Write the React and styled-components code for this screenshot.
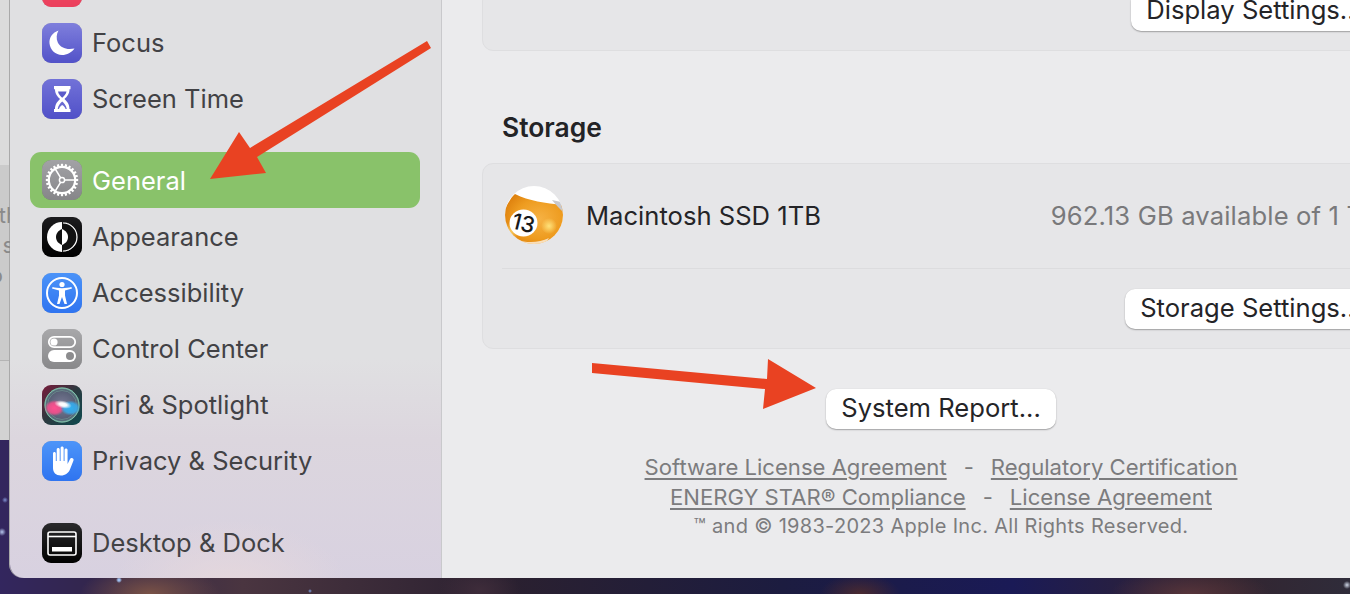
import React from 'react';
import styled, { createGlobalStyle } from 'styled-components';

const GlobalStyle = createGlobalStyle`
  html, body {
    margin: 0;
    padding: 0;
    width: 1350px;
    height: 594px;
    overflow: hidden;
  }
  * {
    box-sizing: border-box;
  }
`;

// galaxy wallpaper behind the windows
const Desktop = styled.div`
  position: relative;
  display: flex;
  align-items: flex-start;
  width: 1350px;
  height: 594px;
  overflow: hidden;
  font-family: Inter, "Liberation Sans", sans-serif;
  background:
    radial-gradient(circle at 119px 580px, #9fc0f0 0, #9fc0f0 1px, transparent 3px),
    radial-gradient(circle at 310px 591px, #7f9fe0 0, transparent 2px),
    radial-gradient(circle at 1347px 585px, #d0d8e8 0, transparent 4px),
    radial-gradient(circle at 2px 532px, #b8c8f0 0, transparent 4px),
    radial-gradient(circle at 5px 500px, #8090d0 0, transparent 3px),
    radial-gradient(ellipse 70px 30px at 150px 594px, #7a5246 0, transparent 100%),
    radial-gradient(ellipse 40px 24px at 480px 590px, #3e2c3a 0, transparent 100%),
    radial-gradient(ellipse 40px 20px at 860px 594px, #4a2a30 0, transparent 100%),
    radial-gradient(ellipse 80px 26px at 1190px 594px, #56343a 0, transparent 100%),
    linear-gradient(90deg, #33265e 0, #33264a 8%, #4a3540 18%, #2a2030 38%, #1c1c40 58%, #1a1a56 75%, #33242f 90%, #2f2c3a 100%);
`;

const BackWindow = styled.div`
  flex: 0 0 10px;
  width: 10px;
  height: 440px;
  display: flex;
  flex-direction: column;
  overflow: hidden;
`;

const BackTop = styled.div`
  height: 165px;
  background: #dbdbdb;
`;

const BackText = styled.div`
  height: 196px;
  padding-top: 35px;
  background: #cbcbcb;
  border-bottom: 1px solid #b4b4b4;
  display: flex;
  flex-direction: column;
  align-items: flex-end;
`;

const BackWord = styled.div`
  height: 30px;
  line-height: 30px;
  font-size: 22px;
  color: #8a8a8a;
  white-space: nowrap;
  transform: translateX(${(p) => p.$shift}px);
`;

const BackBottom = styled.div`
  flex: 1;
  background: #d2d2d2;
`;

const Window = styled.div`
  flex: 0 0 1340px;
  height: 578px;
  display: flex;
  overflow: hidden;
  border-bottom-left-radius: 14px;
  box-shadow: -1px 0 0 #a9a9a9;
`;

const Sidebar = styled.aside`
  flex: 0 0 432px;
  height: 578px;
  padding: 0 21px 0 20px;
  overflow: hidden;
  border-right: 1px solid #c9c9cc;
  background:
    radial-gradient(ellipse 120px 70px at 220px 590px, #e6d8dc 0, transparent 100%),
    linear-gradient(180deg, #e0e0e2 0, #e0e0e2 62%, #dcd6de 76%, #d8d1e0 100%);
`;

const NavList = styled.div`
  margin-top: -41px;
  display: flex;
  flex-direction: column;
`;

const NavRow = styled.div`
  display: flex;
  align-items: center;
  gap: 10px;
  height: 56px;
  padding-left: 12px;
  margin-top: ${(p) => p.$top || 0}px;
  border-radius: 11px;
  font-size: 25.5px;
  color: ${(p) => (p.$active ? '#ffffff' : '#424245')};
  background: ${(p) => (p.$active ? '#89c26a' : 'transparent')};
`;

const NavLabel = styled.span`
  margin-bottom: ${(p) => (p.$active ? 0 : 2)}px;
`;

const IconBox = styled.svg`
  flex: 0 0 40px;
  width: 40px;
  height: 40px;
  display: block;
  filter: drop-shadow(0 0.5px 0.5px rgba(0, 0, 0, 0.25));
`;

const BallBox = styled.svg`
  flex: 0 0 58px;
  margin-left: 3px;
`;

const Content = styled.main`
  flex: 0 0 998px;
  height: 578px;
  padding: 0 40px;
  background: #ebebed;
  display: flex;
  flex-direction: column;
`;

const Group = styled.section`
  border: 1px solid #dedee0;
  border-radius: 11px;
  background: #e6e6e8;
`;

const TopGroup = styled(Group)`
  height: 61px;
  margin-top: -10px;
  padding: 0 22px 19px 19px;
  display: flex;
  justify-content: flex-end;
  align-items: flex-end;
`;

const SectionTitle = styled.h2`
  margin: 0;
  height: 112px;
  padding: 60px 0 0 20px;
  font-size: 26.4px;
  line-height: 32px;
  font-weight: 600;
  color: #232326;
`;

const DiskRow = styled.div`
  height: 105px;
  margin: 0 19px;
  padding-bottom: 2px;
  display: flex;
  align-items: center;
  border-bottom: 1px solid #dcdcde;
`;

const DiskName = styled.div`
  margin-left: 23px;
  font-size: 25.6px;
  color: #242427;
`;

const DiskFree = styled.div`
  margin-left: auto;
  font-size: 25.6px;
  letter-spacing: 0.15px;
  color: #79797b;
  white-space: nowrap;
`;

const ActionRow = styled.div`
  height: 79px;
  padding: 0 22px 19px 19px;
  display: flex;
  align-items: flex-end;
  justify-content: flex-end;
`;

const Button = styled.button`
  height: 40px;
  padding: 0 15px 4px;
  border: 0;
  border-radius: 10px;
  background: #ffffff;
  box-shadow: 0 1px 1.5px rgba(0, 0, 0, 0.3), 0 0 1px rgba(0, 0, 0, 0.12);
  font-family: inherit;
  font-size: 25.6px;
  color: #242427;
  white-space: nowrap;
`;

const Footer = styled.footer`
  margin-top: 40px;
  display: flex;
  flex-direction: column;
  align-items: center;
`;

const LegalLinks = styled.div`
  height: 30px;
  line-height: 30px;
  font-size: 22.1px;
  color: #7c7c7e;
  white-space: nowrap;
  display: flex;
  gap: 17px;
  margin-top: ${(p) => p.$top || 0}px;
`;

const LegalLink = styled.a`
  text-decoration: underline;
  text-underline-offset: 3px;
`;

const Copyright = styled.div`
  height: 28px;
  line-height: 28px;
  font-size: 20px;
  letter-spacing: 0.3px;
  color: #7c7c7e;
  white-space: nowrap;
`;

const ArrowLayer = styled.svg`
  position: absolute;
  left: 0;
  top: 0;
  pointer-events: none;
`;

const Squircle = ({ id, from, to }) => (
  <>
    <defs>
      <linearGradient id={id} x1="0" y1="0" x2="0" y2="1">
        <stop offset="0" stopColor={from} />
        <stop offset="1" stopColor={to} />
      </linearGradient>
    </defs>
    <rect width="40" height="40" rx="9" fill={`url(#${id})`} />
  </>
);

const RedIcon = () => (
  <IconBox viewBox="0 0 40 40">
    <Squircle id="red" from="#f2566c" to="#eb3f5c" />
  </IconBox>
);

const FocusIcon = () => (
  <IconBox viewBox="0 0 40 40">
    <Squircle id="focus" from="#7f7fdc" to="#5252c8" />
    <path d="M16.5 7.5C10.5 9.5 7 14.5 7.5 20.5C8.2 27 13.5 32 20 32C25 32 29.5 29.5 32.5 25.5C25 27 18.5 25 15.8 19.5C14 15.5 14.5 11 16.5 7.5Z" fill="#fff" />
  </IconBox>
);

const HourglassIcon = () => (
  <IconBox viewBox="0 0 40 40">
    <Squircle id="time" from="#7272d8" to="#5050c8" />
    <path d="M12 7H28.5V10.2H27.5C27.5 15 25 17.5 22.5 20C25 22.5 27.5 25 27.5 30H28.5V33H12V30H13C13 25 15.5 22.5 18 20C15.5 17.5 13 15 13 10.2H12Z" fill="#fff" />
    <path d="M16 12.5H24.5C24 15.5 22 17 20.2 18.8C18.5 17 16.5 15.5 16 12.5Z" fill="#5a5aca" />
    <path d="M20.2 22.5C22 24.2 24.2 26.2 24.8 30H15.7C16.2 26.2 18.5 24.2 20.2 22.5Z" fill="#6a6ad2" />
    <path d="M20.2 26C21.8 27 23 28.3 23.6 30H16.9C17.5 28.3 18.7 27 20.2 26Z" fill="#fff" />
  </IconBox>
);

const GearIcon = () => {
  const teeth = Array.from({ length: 24 }, (_, i) => i * 15);
  return (
    <IconBox viewBox="0 0 40 40">
      <Squircle id="gear" from="#a2a2a6" to="#868689" />
      {teeth.map((deg) => (
        <rect key={deg} x="18.9" y="3.8" width="2.2" height="3.6" fill="#fff" transform={`rotate(${deg} 20 20)`} />
      ))}
      <circle cx="20" cy="20" r="13.2" fill="none" stroke="#fff" strokeWidth="2.2" />
      <circle cx="20" cy="20" r="2.6" fill="none" stroke="#fff" strokeWidth="1.5" />
      <path d="M22.6 20H33M18.7 17.8L13 8.5M18.7 22.2L13 31.5" stroke="#fff" strokeWidth="1.5" fill="none" />
    </IconBox>
  );
};

const AppearanceIcon = () => (
  <IconBox viewBox="0 0 40 40">
    <Squircle id="look" from="#1c1c1e" to="#000000" />
    <circle cx="20" cy="20" r="15" fill="#fff" />
    <path d="M20 5A15 15 0 0 1 20 35Z" fill="#111" />
    <path d="M21 6A14 14 0 0 1 21 34" fill="none" stroke="#fff" strokeWidth="1.2" />
    <path d="M20 12C15.5 14 14 17 14 20C14 23 15.5 26 20 28Z" fill="#111" />
    <path d="M20 12C24.5 14 26 17 26 20C26 23 24.5 26 20 28Z" fill="#fff" />
  </IconBox>
);

const AccessIcon = () => (
  <IconBox viewBox="0 0 40 40">
    <Squircle id="access" from="#4b93f8" to="#2f74f0" />
    <circle cx="20" cy="20" r="15" fill="none" stroke="#fff" strokeWidth="2" />
    <circle cx="20" cy="11.5" r="2.6" fill="#fff" />
    <path d="M10 15.5L17 17.5V22.5L15 31H17.5L20 24L22.5 31H25L23 22.5V17.5L30 15.5L29.4 14C25 15.5 15 15.5 10.6 14Z" fill="#fff" />
  </IconBox>
);

const ControlIcon = () => (
  <IconBox viewBox="0 0 40 40">
    <Squircle id="control" from="#a8a8aa" to="#88888a" />
    <rect x="6.8" y="7.8" width="26.4" height="10.4" rx="5.2" fill="none" stroke="#fff" strokeWidth="1.8" />
    <circle cx="12" cy="13" r="3.6" fill="#fff" />
    <rect x="6" y="21" width="28" height="12" rx="6" fill="#fff" />
    <circle cx="28" cy="27" r="4" fill="#8c8c8e" />
  </IconBox>
);

const SiriIcon = () => (
  <IconBox viewBox="0 0 40 40">
    <defs>
      <linearGradient id="siribg" x1="0" y1="0" x2="1" y2="1">
        <stop offset="0" stopColor="#7a1a3a" />
        <stop offset="0.5" stopColor="#2a3a40" />
        <stop offset="1" stopColor="#0e4a50" />
      </linearGradient>
      <radialGradient id="siriball" cx="0.5" cy="0.5" r="0.5">
        <stop offset="0" stopColor="#7a7a96" />
        <stop offset="0.85" stopColor="#565e74" />
        <stop offset="1" stopColor="#5f9a90" />
      </radialGradient>
      <radialGradient id="siripink"><stop offset="0" stopColor="#ff4f90" /><stop offset="0.65" stopColor="#f0508c" stopOpacity="0.9" /><stop offset="1" stopColor="#f0508c" stopOpacity="0" /></radialGradient>
      <radialGradient id="siriblue"><stop offset="0" stopColor="#2fb0f0" /><stop offset="0.65" stopColor="#3aa8e8" stopOpacity="0.9" /><stop offset="1" stopColor="#3aa8e8" stopOpacity="0" /></radialGradient>
      <radialGradient id="siriwhite"><stop offset="0" stopColor="#fff" /><stop offset="0.4" stopColor="#fff" stopOpacity="0.95" /><stop offset="1" stopColor="#fff" stopOpacity="0" /></radialGradient>
    </defs>
    <rect width="40" height="40" rx="9" fill="url(#siribg)" />
    <circle cx="20" cy="20" r="17.5" fill="url(#siriball)" />
    <circle cx="20" cy="20" r="17" fill="none" stroke="#8fd0b4" strokeWidth="0.8" />
    <circle cx="20" cy="20" r="14.5" fill="none" stroke="#7fc0a8" strokeWidth="0.6" opacity="0.7" />
    <ellipse cx="12.5" cy="23" rx="10" ry="8" fill="url(#siripink)" />
    <ellipse cx="28.5" cy="23" rx="10" ry="7.5" fill="url(#siriblue)" />
    <ellipse cx="21" cy="19.5" rx="9" ry="4" fill="url(#siriwhite)" transform="rotate(12 21 19.5)" />
  </IconBox>
);

const HandIcon = () => (
  <IconBox viewBox="0 0 40 40">
    <Squircle id="hand" from="#4d95f9" to="#2f74f0" />
    <path transform="translate(-3 0) scale(1.12 1)" d="M12.5 12.5C12.5 10.5 15 10.5 15 12.5V20H15.8V8.5C15.8 6.5 18.5 6.5 18.5 8.5V20H19.3V7C19.3 5 22 5 22 7V20H22.8V9C22.8 7 25.5 7 25.5 9V23L27.5 18.5C28.5 16 31.5 17 30.8 19.5L27.8 28C26.5 32 23.5 34.5 19.5 34.5C15 34.5 12.5 31.5 12.5 27Z" fill="#fff" />
  </IconBox>
);

const DockIcon = () => (
  <IconBox viewBox="0 0 40 40">
    <Squircle id="dock" from="#2a2a2c" to="#000000" />
    <rect x="6" y="9" width="28" height="23" rx="2" fill="none" stroke="#fff" strokeWidth="1.6" />
    <path d="M6 13.5H34" stroke="#fff" strokeWidth="1.6" />
    <rect x="10" y="24" width="20" height="4.5" fill="#fff" />
  </IconBox>
);

const BallIcon = () => (
  <BallBox width="58" height="58" viewBox="0 0 58 58">
    <defs>
      <radialGradient id="ballbody" cx="0.6" cy="0.5" r="0.65">
        <stop offset="0" stopColor="#f6b244" />
        <stop offset="0.6" stopColor="#ee9c20" />
        <stop offset="1" stopColor="#dc7e0c" />
      </radialGradient>
      <radialGradient id="ballglow"><stop offset="0" stopColor="#ffe27a" /><stop offset="1" stopColor="#ffe27a" stopOpacity="0" /></radialGradient>
      <clipPath id="ballclip"><circle cx="29" cy="29" r="29" /></clipPath>
    </defs>
    <circle cx="29" cy="29" r="29" fill="#fff" />
    <g clipPath="url(#ballclip)">
      <path d="M-2 26C3 18 6 11 10 8C24 15 40 17 58 19V58H-2Z" fill="url(#ballbody)" />
      <path d="M47 14L56 16L58 26C54 22 50 18 47 14Z" fill="#c8c8cc" />
      <circle cx="44" cy="40" r="8" fill="url(#ballglow)" />
      <circle cx="5" cy="46" r="9" fill="url(#ballglow)" opacity="0.8" />
      <path d="M12 54C22 57 34 57 44 52L40 58H16Z" fill="#fff" opacity="0.7" />
    </g>
    <ellipse cx="18.5" cy="37" rx="14" ry="13.5" fill="#fff" />
    <text x="18.5" y="45" textAnchor="middle" fontFamily="Inter, sans-serif" fontWeight="500" fontSize="22" fill="#1a1a1a" transform="rotate(14 18.5 37)">13</text>
  </BallBox>
);

const navItems = [
  { label: '', Icon: RedIcon },
  { label: 'Focus', Icon: FocusIcon },
  { label: 'Screen Time', Icon: HourglassIcon },
  { label: 'General', Icon: GearIcon, active: true, top: 25 },
  { label: 'Appearance', Icon: AppearanceIcon, top: 1 },
  { label: 'Accessibility', Icon: AccessIcon },
  { label: 'Control Center', Icon: ControlIcon },
  { label: 'Siri & Spotlight', Icon: SiriIcon },
  { label: 'Privacy & Security', Icon: HandIcon },
  { label: 'Desktop & Dock', Icon: DockIcon, top: 26 },
];

const App = () => {
  return (
    <Desktop>
      <GlobalStyle />
      <BackWindow>
        <BackTop />
        <BackText>
          <BackWord $shift={9}>th</BackWord>
          <BackWord $shift={4}>s</BackWord>
          <BackWord $shift={-7}>o</BackWord>
        </BackText>
        <BackBottom />
      </BackWindow>
      <Window>
        <Sidebar>
          <NavList>
            {navItems.map(({ label, Icon, active, top }, index) => (
              <NavRow key={index} $active={active} $top={top}>
                <Icon />
                <NavLabel $active={active}>{label}</NavLabel>
              </NavRow>
            ))}
          </NavList>
        </Sidebar>
        <Content>
          <TopGroup>
            <Button>Display Settings...</Button>
          </TopGroup>
          <SectionTitle>Storage</SectionTitle>
          <Group>
            <DiskRow>
              <BallIcon />
              <DiskName>Macintosh SSD 1TB</DiskName>
              <DiskFree>962.13 GB available of 1 TB</DiskFree>
            </DiskRow>
            <ActionRow>
              <Button>Storage Settings...</Button>
            </ActionRow>
          </Group>
          <Footer>
            <Button>System Report...</Button>
            <LegalLinks $top={23}>
              <LegalLink>Software License Agreement</LegalLink>
              <span>-</span>
              <LegalLink>Regulatory Certification</LegalLink>
            </LegalLinks>
            <LegalLinks>
              <LegalLink>ENERGY STAR® Compliance</LegalLink>
              <span>-</span>
              <LegalLink>License Agreement</LegalLink>
            </LegalLinks>
            <Copyright>™ and © 1983-2023 Apple Inc. All Rights Reserved.</Copyright>
          </Footer>
        </Content>
      </Window>
      <ArrowLayer width="1350" height="594" viewBox="0 0 1350 594">
        <path d="M427 41L431 48L257 157L266 173L210 179L239 132L250 148Z" fill="#e94222" />
        <path d="M592 363L767 379L768 359L816 388L763 409L765 389L592 373Z" fill="#e94222" />
      </ArrowLayer>
    </Desktop>
  );
};

export default App;
